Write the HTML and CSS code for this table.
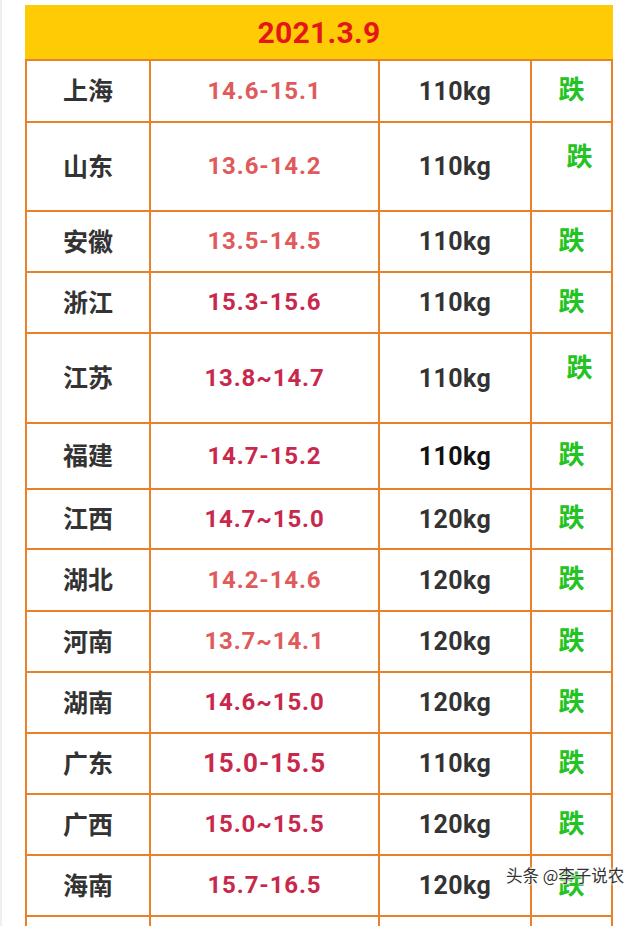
FILE: index.html
```html
<!DOCTYPE html>
<html lang="zh">
<head>
<meta charset="utf-8">
<title>2021.3.9</title>
<link rel="stylesheet" href="styles.css">
</head>
<body>
<div class="page">
  <div class="sheet">
    <div class="head">2021.3.9</div>

    <div class="cell prov">上海</div><div class="cell price salmon">14.6-15.1</div><div class="cell kg">110kg</div><div class="cell fall">跌</div>
    <div class="cell prov">山东</div><div class="cell price salmon">13.6-14.2</div><div class="cell kg">110kg</div><div class="cell fall high">跌</div>
    <div class="cell prov">安徽</div><div class="cell price salmon">13.5-14.5</div><div class="cell kg">110kg</div><div class="cell fall">跌</div>
    <div class="cell prov">浙江</div><div class="cell price crimson">15.3-15.6</div><div class="cell kg">110kg</div><div class="cell fall">跌</div>
    <div class="cell prov">江苏</div><div class="cell price crimson">13.8~14.7</div><div class="cell kg">110kg</div><div class="cell fall high">跌</div>
    <div class="cell prov">福建</div><div class="cell price crimson">14.7-15.2</div><div class="cell kg dark">110kg</div><div class="cell fall">跌</div>
    <div class="cell prov">江西</div><div class="cell price crimson">14.7~15.0</div><div class="cell kg">120kg</div><div class="cell fall">跌</div>
    <div class="cell prov">湖北</div><div class="cell price salmon">14.2-14.6</div><div class="cell kg">120kg</div><div class="cell fall">跌</div>
    <div class="cell prov">河南</div><div class="cell price salmon">13.7~14.1</div><div class="cell kg">120kg</div><div class="cell fall">跌</div>
    <div class="cell prov">湖南</div><div class="cell price crimson">14.6~15.0</div><div class="cell kg">120kg</div><div class="cell fall">跌</div>
    <div class="cell prov">广东</div><div class="cell price crimson big">15.0-15.5</div><div class="cell kg">110kg</div><div class="cell fall">跌</div>
    <div class="cell prov">广西</div><div class="cell price crimson">15.0~15.5</div><div class="cell kg">120kg</div><div class="cell fall">跌</div>
    <div class="cell prov">海南</div><div class="cell price crimson">15.7-16.5</div><div class="cell kg">120kg</div><div class="cell fall">跌</div>
    <div class="cell"></div><div class="cell"></div><div class="cell"></div><div class="cell"></div>
  </div>
  <div class="mark">头条 @李子说农</div>
</div>
</body>
</html>
```

FILE: styles.css
```css
html, body {
  margin: 0;
  padding: 0;
  background: #ffffff;
}

body {
  width: 640px;
  height: 926px;
  overflow: hidden;
  font-family: Roboto, "Noto Sans CJK SC", sans-serif;
}

.page {
  position: relative;
  height: 926px;
  padding: 5px 0 0 23px;
  box-sizing: border-box;
  border-left: 2px solid #efefef;
}

.sheet {
  display: grid;
  width: 588px;
  box-sizing: border-box;
  grid-template-columns: 122px 227px 150px 79px;
  grid-template-rows: 54px 60px 87px 59px 59px 88px 64px 58px 60px 59px 59px 59px 59px 59px 9px;
  gap: 2px;
  padding: 0 2px;
  background: #e8822a;
}

.head {
  grid-column: 1 / -1;
  margin: 0 -2px;
  background: #ffcb05;
  color: #e3161a;
  font-family: Roboto, sans-serif;
  font-weight: 700;
  font-size: 30px;
  letter-spacing: 0.3px;
  display: flex;
  align-items: center;
  justify-content: center;
  padding-top: 1px;
}

.cell {
  background: #ffffff;
  display: flex;
  align-items: center;
  justify-content: center;
}

.prov {
  font-family: "Noto Sans CJK SC", sans-serif;
  font-weight: 700;
  font-size: 25px;
  color: #333333;
  padding-bottom: 4px;
}

.price {
  font-family: Roboto, sans-serif;
  font-weight: 700;
  font-size: 24px;
  letter-spacing: 0.9px;
  padding-bottom: 1px;
}

.salmon {
  color: #e05a5c;
}

.crimson {
  color: #c8284c;
}

.big {
  font-size: 26px;
}

.kg {
  font-family: Roboto, sans-serif;
  font-weight: 700;
  font-size: 25px;
  letter-spacing: 0.4px;
  color: #333333;
}

.dark {
  color: #111111;
}

.fall {
  font-family: "Noto Sans CJK SC", sans-serif;
  font-weight: 700;
  font-size: 26px;
  color: #22c322;
  padding-bottom: 7px;
}

.high {
  align-items: flex-start;
  padding: 13px 0 0 16px;
}

.mark {
  position: absolute;
  left: 504px;
  top: 863px;
  font-family: "Noto Sans CJK SC", sans-serif;
  font-size: 16.5px;
  color: #333333;
  text-shadow: 0 0 2px #ffffff, 0 0 2px #ffffff, 0 0 3px #ffffff;
  white-space: nowrap;
}
```
